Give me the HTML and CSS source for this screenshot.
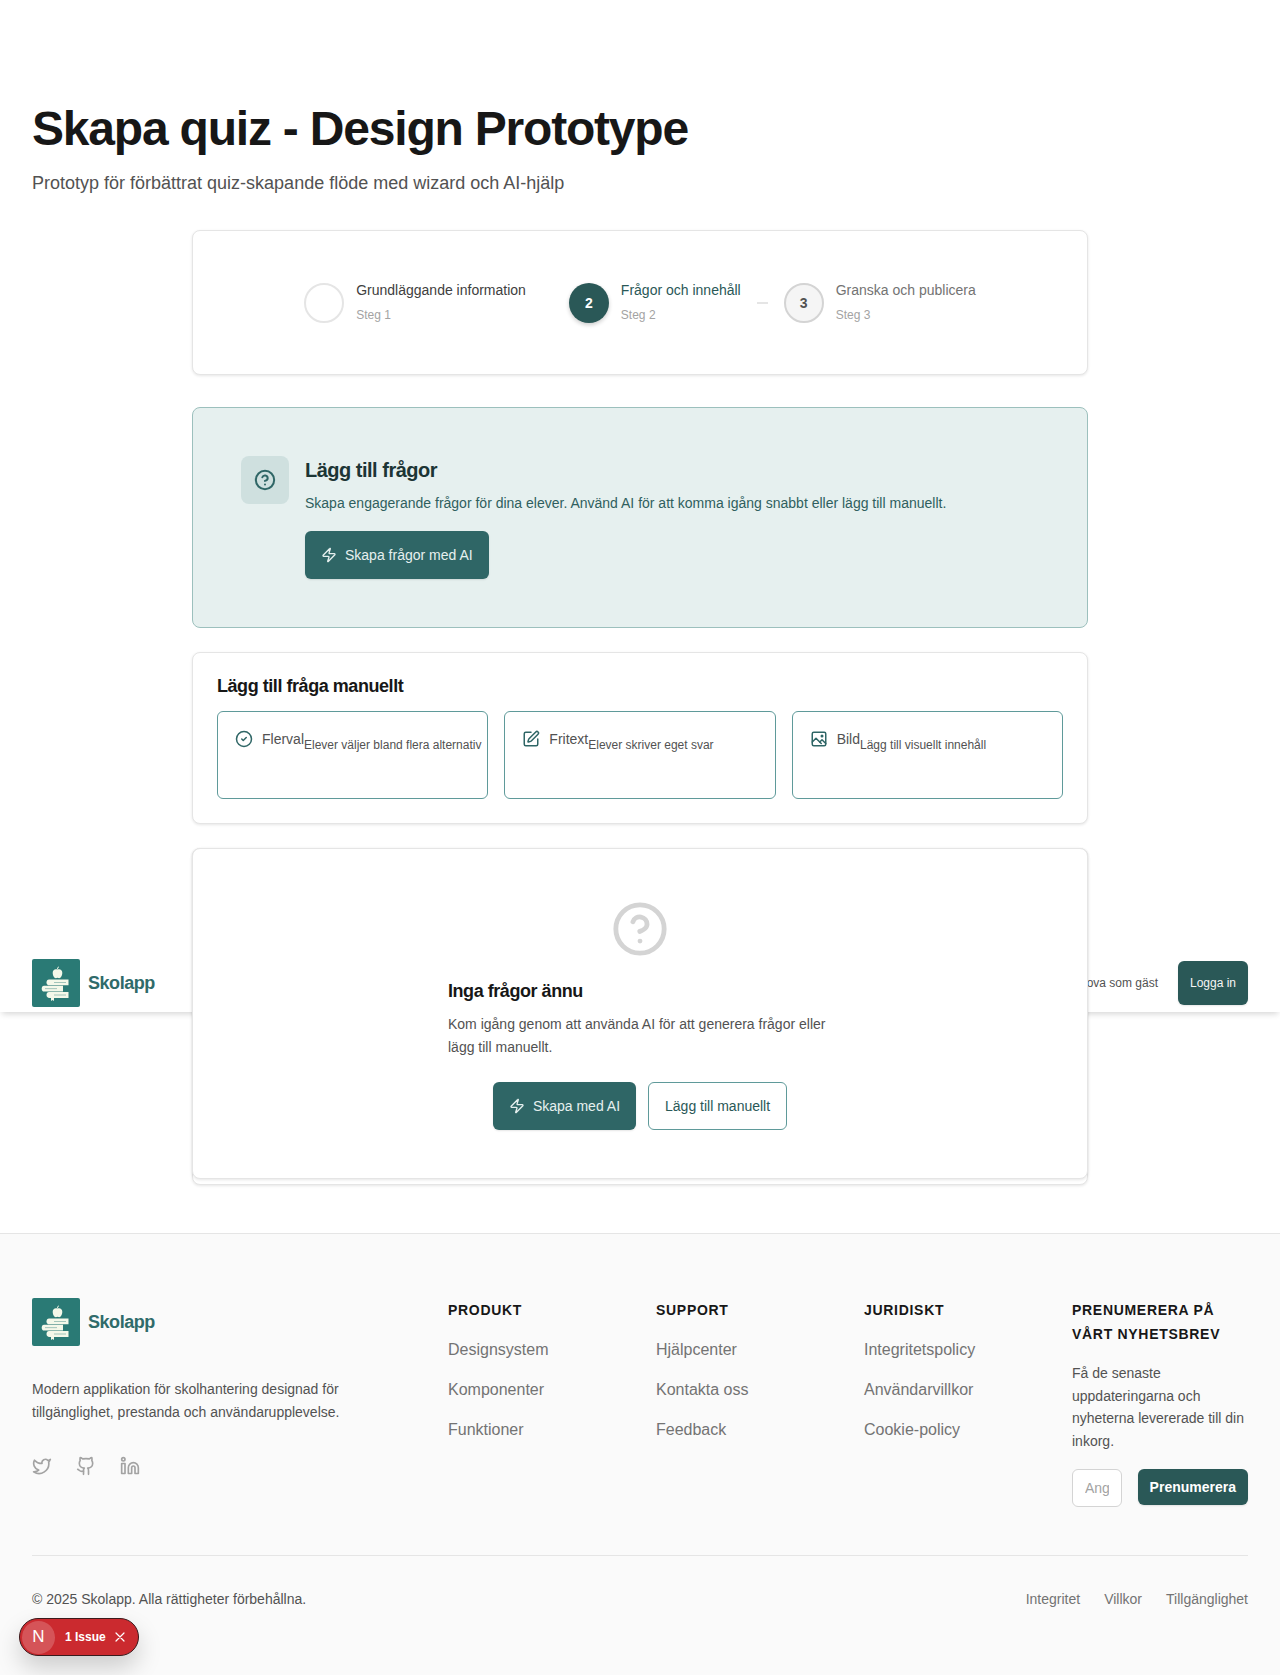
FILE: index.html
```html
<!DOCTYPE html>
<html lang="sv">
<head>
    <meta charset="UTF-8">
    <meta name="viewport" content="width=device-width, initial-scale=1.0">
    <title>Skapa quiz - Design Prototype</title>
    <link rel="stylesheet" href="styles.css">
</head>
<body>
    <svg class="defs" width="0" height="0">
        <symbol id="logo" viewBox="0 0 48 48">
            <rect width="48" height="48" rx="2" fill="#2a7a75"/>
            <g fill="#f4f8e9">
                <path d="M25.500 10.500c2.400-1 4.800.3 4.800 3.300 0 2.800-1.500 5.400-3.100 5.400-.7 0-1-.4-1.700-.4s-1 .4-1.700.4c-1.600 0-3.100-2.600-3.100-5.400 0-3 2.400-4.300 4.800-3.300z"/>
                <path d="M25.100 10.200c0-1.200.5-2 1.400-2.700l.6.6c-.8.6-1.200 1.200-1.200 2.100z"/>
                <path d="M17 20.500h19.500v5.800h-19c-2 0-3-1.300-3-2.900s1-2.900 2.500-2.900z"/>
                <path d="M12 26.800h19v5.800h-19c-1.400 0-2.300-1.300-2.300-2.900s.9-2.900 2.300-2.900z"/>
                <path d="M17 33.100h19.500v5.800h-19c-2 0-3-1.300-3-2.900s1-2.900 2.500-2.900z"/>
                <path d="M19 38.800h3v3.200l-1.500-1-1.500 1z"/>
            </g>
            <g fill="#2a7a75" opacity=".5">
                <rect x="22" y="23" width="12" height=".8"/>
                <rect x="13" y="29.300" width="12" height=".8"/>
                <rect x="22" y="35.600" width="12" height=".8"/>
            </g>
        </symbol>
        <symbol id="help" viewBox="0 0 24 24">
            <circle cx="12" cy="12" r="10"/>
            <path d="M9.090 9a3 3 0 0 1 5.830 1c0 2-3 3-3 3"/>
            <path d="M12 17h.01"/>
        </symbol>
        <symbol id="zap" viewBox="0 0 24 24">
            <path d="M4 14a1 1 0 0 1-.78-1.630l9.900-10.200a.5.5 0 0 1 .86.460l-1.920 6.020A1 1 0 0 0 13 10h7a1 1 0 0 1 .78 1.630l-9.900 10.200a.5.5 0 0 1-.86-.460l1.920-6.020A1 1 0 0 0 11 14z"/>
        </symbol>
    </svg>

    <header class="topbar">
        <a class="brand" href="#">
            <svg class="brand-logo"><use href="#logo"/></svg>
            <span>Skolapp</span>
        </a>
        <div class="topbar-actions">
            <a class="guest-link" href="#">Prova som gäst</a>
            <button class="login-btn">Logga in</button>
        </div>
    </header>

    <main class="page">
        <h1>Skapa quiz - Design Prototype</h1>
        <p class="lead">Prototyp för förbättrat quiz-skapande flöde med wizard och AI-hjälp</p>

        <section class="card steps">
            <div class="step step-done">
                <span class="step-num"></span>
                <div class="step-text">
                    <div class="step-title">Grundläggande information</div>
                    <div class="step-sub">Steg 1</div>
                </div>
            </div>
            <span class="step-line step-line-done"></span>
            <div class="step step-active">
                <span class="step-num">2</span>
                <div class="step-text">
                    <div class="step-title">Frågor och innehåll</div>
                    <div class="step-sub">Steg 2</div>
                </div>
            </div>
            <span class="step-line"></span>
            <div class="step step-next">
                <span class="step-num">3</span>
                <div class="step-text">
                    <div class="step-title">Granska och publicera</div>
                    <div class="step-sub">Steg 3</div>
                </div>
            </div>
        </section>

        <section class="hero">
            <div class="hero-icon">
                <svg class="icon-22"><use href="#help"/></svg>
            </div>
            <div>
                <h2>Lägg till frågor</h2>
                <p>Skapa engagerande frågor för dina elever. Använd AI för att komma igång snabbt eller lägg till manuellt.</p>
                <button class="btn btn-primary">
                    <svg class="icon-16"><use href="#zap"/></svg>
                    Skapa frågor med AI
                </button>
            </div>
        </section>

        <section class="card manual">
            <h3>Lägg till fråga manuellt</h3>
            <div class="manual-grid">
                <button class="type-btn">
                    <svg class="icon-18" viewBox="0 0 24 24"><circle cx="12" cy="12" r="10"/><path d="m9 12 2 2 4-4"/></svg>
                    <span class="type-name">Flerval</span><span class="type-desc">Elever väljer bland flera alternativ</span>
                </button>
                <button class="type-btn">
                    <svg class="icon-18" viewBox="0 0 24 24"><path d="M12 3H5a2 2 0 0 0-2 2v14a2 2 0 0 0 2 2h14a2 2 0 0 0 2-2v-7"/><path d="M18.375 2.625a1 1 0 0 1 3 3l-9.013 9.014a2 2 0 0 1-.853.505l-2.873.84a.5.5 0 0 1-.62-.62l.84-2.873a2 2 0 0 1 .506-.852z"/></svg>
                    <span class="type-name">Fritext</span><span class="type-desc">Elever skriver eget svar</span>
                </button>
                <button class="type-btn">
                    <svg class="icon-18" viewBox="0 0 24 24"><rect x="3" y="3" width="18" height="18" rx="2"/><circle cx="16" cy="8" r="1"/><path d="m3 16 5-5 7 7"/><path d="m13 16 3-3 5 5"/></svg>
                    <span class="type-name">Bild</span><span class="type-desc">Lägg till visuellt innehåll</span>
                </button>
            </div>
        </section>

        <section class="card empty-wrap">
            <div class="card empty">
                <svg class="empty-icon"><use href="#help"/></svg>
                <div class="empty-text">
                    <h3>Inga frågor ännu</h3>
                    <p>Kom igång genom att använda AI för att generera frågor eller lägg till manuellt.</p>
                </div>
                <div class="empty-actions">
                    <button class="btn btn-primary">
                        <svg class="icon-16"><use href="#zap"/></svg>
                        Skapa med AI
                    </button>
                    <button class="btn btn-outline">Lägg till manuellt</button>
                </div>
            </div>
        </section>
    </main>

    <footer class="footer">
        <div class="footer-grid">
            <div class="footer-about">
                <a class="brand" href="#">
                    <svg class="brand-logo"><use href="#logo"/></svg>
                    <span>Skolapp</span>
                </a>
                <p>Modern applikation för skolhantering designad för tillgänglighet, prestanda och användarupplevelse.</p>
                <div class="socials">
                    <a href="#"><svg class="icon-20" viewBox="0 0 24 24"><path d="M22 4s-.7 2.100-2 3.400c1.600 10-9.400 17.300-18 11.600 2.200.1 4.400-.6 6-2C3 15.500.5 9.600 3 5c2.200 2.600 5.600 4.100 9 4-.9-4.200 4-6.600 7-3.800 1.100 0 3-1.200 3-1.200z"/></svg></a>
                    <a href="#"><svg class="icon-20" viewBox="0 0 24 24"><path d="M15 22v-4a4.800 4.800 0 0 0-1-3.500c3 0 6-2 6-5.500.08-1.250-.27-2.480-1-3.500.28-1.150.28-2.350 0-3.500 0 0-1 0-3 1.500-2.640-.5-5.360-.5-8 0C6 2 5 2 5 2c-.3 1.150-.3 2.350 0 3.500A5.403 5.403 0 0 0 4 9c0 3.500 3 5.500 6 5.500-.39.49-.68 1.050-.85 1.650-.17.6-.22 1.230-.15 1.850v4"/><path d="M9 18c-4.510 2-5-2-7-2"/></svg></a>
                    <a href="#"><svg class="icon-20" viewBox="0 0 24 24"><path d="M16 8a6 6 0 0 1 6 6v7h-4v-7a2 2 0 0 0-2-2 2 2 0 0 0-2 2v7h-4v-7a6 6 0 0 1 6-6z"/><rect x="2" y="9" width="4" height="12"/><circle cx="4" cy="4" r="2"/></svg></a>
                </div>
            </div>
            <div class="footer-col">
                <h4>Produkt</h4>
                <a href="#">Designsystem</a>
                <a href="#">Komponenter</a>
                <a href="#">Funktioner</a>
            </div>
            <div class="footer-col">
                <h4>Support</h4>
                <a href="#">Hjälpcenter</a>
                <a href="#">Kontakta oss</a>
                <a href="#">Feedback</a>
            </div>
            <div class="footer-col">
                <h4>Juridiskt</h4>
                <a href="#">Integritetspolicy</a>
                <a href="#">Användarvillkor</a>
                <a href="#">Cookie-policy</a>
            </div>
            <div class="newsletter">
                <h4>Prenumerera på vårt nyhetsbrev</h4>
                <p>Få de senaste uppdateringarna och nyheterna levererade till din inkorg.</p>
                <form class="newsletter-form">
                    <input type="email" placeholder="Ange din e-post">
                    <button type="button">Prenumerera</button>
                </form>
            </div>
        </div>
        <div class="footer-bottom">
            <span>© 2025 Skolapp. Alla rättigheter förbehållna.</span>
            <div class="legal-links">
                <a href="#">Integritet</a>
                <a href="#">Villkor</a>
                <a href="#">Tillgänglighet</a>
            </div>
        </div>
    </footer>

    <div class="issue-badge">
        <span class="issue-logo">N</span>
        <span class="issue-count">1 Issue</span>
        <svg class="issue-close" viewBox="0 0 12 12"><path d="M2 2l8 8M10 2l-8 8"/></svg>
    </div>
</body>
</html>
```

FILE: styles.css
```css
* { box-sizing: border-box; }
body { margin: 0; min-height: 100vh; display: flex; flex-direction: column; position: relative; font-family: "Liberation Sans", Arial, sans-serif; background: #fff; color: #171717; }
a { color: inherit; text-decoration: none; }
button { font-family: inherit; cursor: pointer; }
h1, h2, h3, h4, p { margin: 0; }
svg { fill: none; stroke: currentColor; stroke-width: 2; stroke-linecap: round; stroke-linejoin: round; flex-shrink: 0; }
.defs { position: absolute; }
.icon-16 { width: 16px; height: 16px; }
.icon-18 { width: 18px; height: 18px; }
.icon-20 { width: 20px; height: 20px; }
.icon-22 { width: 22px; height: 22px; stroke-width: 2.2; }

/* header sits behind the cards */
.topbar { position: absolute; top: 947px; left: 0; right: 0; height: 65px; padding: 12px 32px 5px; display: flex; justify-content: space-between; align-items: center; background: #fff; box-shadow: 0 4px 6px -2px rgba(0,0,0,.16); }
.brand { display: flex; align-items: center; gap: 8px; font-size: 18px; font-weight: 700; letter-spacing: -0.45px; color: #2f6b6a; }
.brand span { padding-top: 1px; }
.brand-logo { width: 48px; height: 48px; stroke: none; }
.topbar-actions { display: flex; align-items: center; gap: 20px; font-size: 12px; color: #525252; }
.login-btn { height: 44px; width: 70px; padding: 0; border: none; border-radius: 6px; background: #2a5857; color: #f5f5f5; font-size: 12px; box-shadow: 0 1px 2px rgba(0,0,0,.1); }

.page { position: relative; width: 1280px; padding: 105px 32px 48px; }
h1 { font-size: 48px; line-height: 48px; letter-spacing: -1.2px; }
.lead { margin-top: 16px; margin-bottom: 33px; font-size: 18px; line-height: 28px; color: #525252; }

.card, .hero { width: 896px; margin: 0 auto; border-radius: 8px; }
.card { background: #fff; border: 1px solid #e5e5e5; box-shadow: 0 1px 3px rgba(0,0,0,.1); }

.steps { display: flex; justify-content: center; align-items: flex-end; padding: 49px 32px 51px; margin-bottom: 32px; }
.step { display: flex; align-items: flex-end; gap: 12px; }
.step-num { width: 40px; height: 40px; border-radius: 50%; display: flex; align-items: center; justify-content: center; font-size: 14px; font-weight: 700; }
.step-title { font-size: 14px; line-height: 20px; }
.step-sub { margin-top: 7px; font-size: 12px; line-height: 16px; color: #a3a3a3; }
.step-line { width: 11px; height: 2px; margin: 0 16px 19px; background: #e5e5e5; }
.step-line-done { background: transparent; }
.step-done .step-num { border: 2px solid #e5e5e5; background: #fff; }
.step-done .step-title { color: #404040; }
.step-active .step-num { background: #2a5857; color: #fff; box-shadow: 0 2px 4px rgba(0,0,0,.2); }
.step-active .step-title { color: #2a5857; }
.step-next .step-num { border: 2px solid #d4d4d4; background: #f5f5f5; color: #525252; }
.step-next .step-title { color: #737373; }

.hero { display: flex; gap: 16px; padding: 48px; margin-bottom: 24px; background: #e6f0ef; border: 1px solid #9cc0bd; }
.hero-icon { width: 48px; height: 48px; border-radius: 8px; background: #cfe0df; color: #2f6666; display: flex; align-items: center; justify-content: center; }
.hero h2 { font-size: 20px; line-height: 28px; letter-spacing: -0.5px; color: #1c3535; }
.hero p { margin: 8px 0 16px; font-size: 14px; line-height: 22.75px; color: #2f5f5e; }

.btn { height: 48px; padding: 0 16px; display: inline-flex; align-items: center; gap: 8px; border-radius: 6px; font-size: 14px; }
.btn-primary { background: #2f6666; border: none; color: #e6f0ef; box-shadow: 0 1px 2px rgba(0,0,0,.1); }
.btn-outline { background: #fff; border: 1px solid #5f9a9a; color: #2a5857; }

.manual { padding: 19px 24px 24px; margin-bottom: 24px; }
.manual h3 { font-size: 18px; line-height: 28px; letter-spacing: -0.45px; margin-bottom: 11px; }
.manual-grid { display: grid; grid-template-columns: repeat(3, minmax(0, 1fr)); gap: 16px; }
.type-btn { height: 88px; padding: 18px 0 0 17px; display: flex; align-items: flex-start; background: #fff; border: 1px solid #5f9a9a; border-radius: 6px; text-align: left; white-space: nowrap; }
.type-btn .icon-18 { margin-right: 9px; color: #2f6666; }
.type-name { font-size: 14px; line-height: 18px; color: #525252; }
.type-desc { margin-top: 6px; font-size: 12px; line-height: 18px; color: #525252; }

.empty-wrap { padding-bottom: 6px; }
.empty { width: auto; margin: -1px; padding: 51px 48px 48px; display: flex; flex-direction: column; align-items: center; }
.empty-icon { width: 58px; height: 58px; color: #d4d4d4; }
.empty-text { width: 384px; margin-top: 19px; }
.empty h3 { font-size: 18px; line-height: 28px; letter-spacing: -0.45px; }
.empty p { margin: 8px 0 23px; font-size: 14px; line-height: 23px; color: #525252; }
.empty-actions { display: flex; gap: 12px; }

.footer { flex: 1; padding: 64px 32px 0; background: #fafafa; border-top: 1px solid #e5e5e5; }
.footer-grid { display: grid; grid-template-columns: repeat(6, minmax(0, 1fr)); gap: 32px; padding-bottom: 48px; border-bottom: 1px solid #e5e5e5; }
.footer-about { grid-column: span 2; }
.footer-about p { margin-top: 32px; font-size: 14px; line-height: 22.75px; color: #525252; }
.socials { display: flex; gap: 24px; margin-top: 33px; color: #a3a3a3; }
.socials a { display: block; height: 20px; }
.footer h4 { font-size: 14px; line-height: 24px; font-weight: 700; letter-spacing: .7px; text-transform: uppercase; color: #171717; margin-bottom: 16px; }
.footer-col { display: flex; flex-direction: column; gap: 16px; }
.footer-col h4 { margin-bottom: 0; }
.footer-col a { font-size: 16px; line-height: 24px; color: #737373; }
.newsletter p { margin-bottom: 16px; font-size: 14px; line-height: 22.75px; color: #525252; }
.newsletter-form { display: flex; align-items: flex-start; gap: 16px; }
.newsletter-form input { flex: 1; min-width: 0; height: 38px; padding: 0 12px; border: 1px solid #d4d4d4; border-radius: 6px; background: #fff; font-size: 14px; font-family: inherit; }
.newsletter-form input::placeholder { color: #a3a3a3; }
.newsletter-form button { height: 36px; padding: 0 12px; border: none; border-radius: 6px; background: #2a5857; color: #fff; font-size: 14px; font-weight: 700; box-shadow: 0 1px 2px rgba(0,0,0,.1); }
.footer-bottom { display: flex; justify-content: space-between; padding-top: 31px; font-size: 14px; line-height: 24px; color: #525252; }
.legal-links { display: flex; gap: 24px; color: #737373; }

/* dev overlay badge */
.issue-badge { position: absolute; left: 19px; top: 1618px; width: 120px; height: 38px; padding: 0 12px 0 2px; display: flex; align-items: center; background: #cb2a2f; border: 1px solid #3a1a1c; border-radius: 19px; color: #fff; box-shadow: 0 12px 24px rgba(0,0,0,.18); }
.issue-logo { width: 33px; height: 33px; border-radius: 50%; background: rgba(255,255,255,.2); display: flex; align-items: center; justify-content: center; font-size: 17px; }
.issue-count { margin-left: 10px; font-size: 12px; font-weight: 700; }
.issue-close { width: 12px; height: 12px; margin-left: auto; stroke-width: 1.2; }
```
